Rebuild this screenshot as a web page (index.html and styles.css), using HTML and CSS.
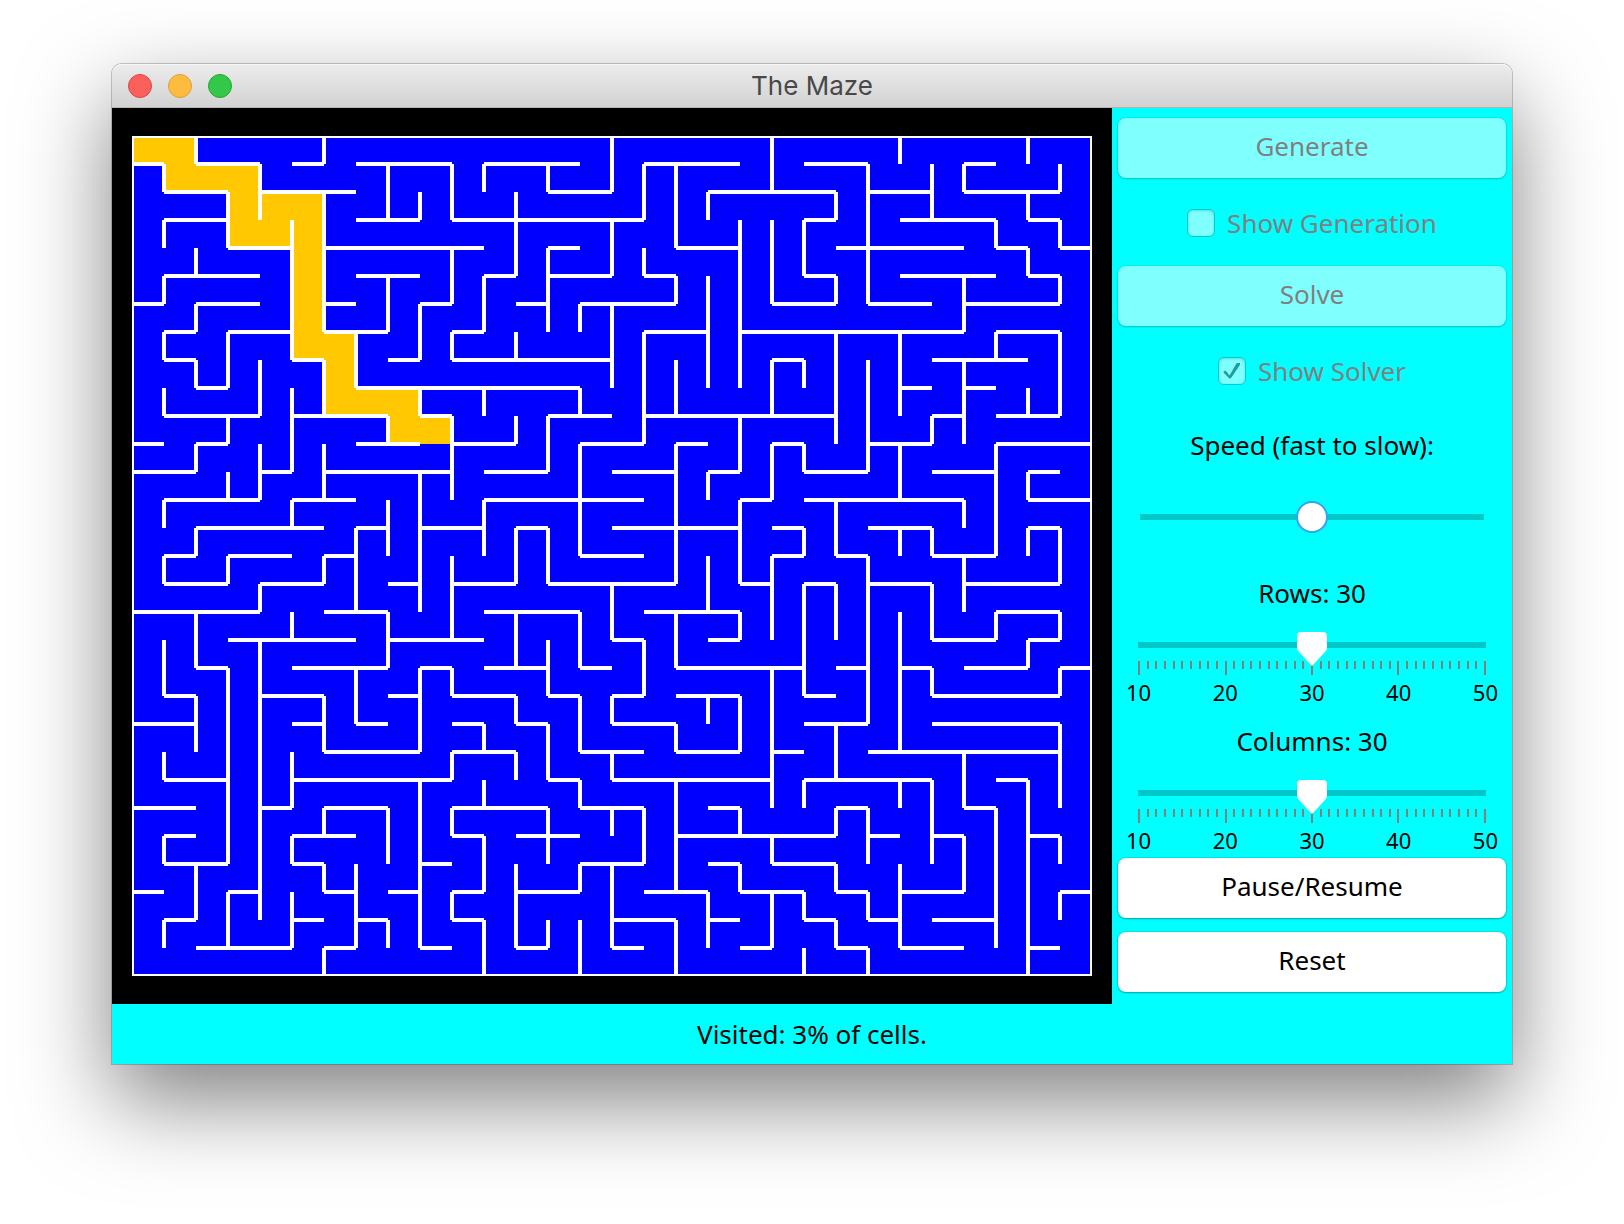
FILE: index.html
```html
<!DOCTYPE html>
<html lang="en">
<head>
<meta charset="utf-8">
<title>The Maze</title>
<link rel="stylesheet" href="styles.css">
</head>
<body>
<main class="window">
  <header class="titlebar">
    <div class="lights">
      <button class="light light-close" type="button" aria-label="Close"></button>
      <button class="light light-minimize" type="button" aria-label="Minimize"></button>
      <button class="light light-zoom" type="button" aria-label="Zoom"></button>
    </div>
    <h1 class="title">The Maze</h1>
  </header>

  <div class="content">
    <div class="board">
      <!-- One unit per cell: 30 columns by 30 rows -->
      <svg class="maze" viewBox="0 0 30 30" preserveAspectRatio="none" role="img" aria-label="Maze with the solver's path">
        <path class="trail" d="M0 0H2V1H4V2H6V7H7V9H9V10H10V11H8V10H6V8H5V4H3V2H1V1H0Z"/>
        <path class="walls" d="
          M0 1H1M2 1H4M5 1H6M7 1H10M11 1H14M16 1H19M21 1H23M26 1H27
          M1 2H3M4 2H7M13 2H15M18 2H22M23 2H25M26 2H29
          M1 3H3M7 3H9M10 3H16M21 3H22M24 3H27M28 3H29
          M3 4H5M6 4H11M13 4H14M17 4H19M22 4H26M27 4H28M29 4H30
          M1 5H4M7 5H9M11 5H12M13 5H15M16 5H17M21 5H22M24 5H27M28 5H29
          M0 6H1M2 6H4M6 6H7M9 6H10M12 6H13M14 6H17M20 6H22M23 6H25M26 6H29
          M1 7H2M3 7H5M6 7H8M10 7H11M16 7H18M19 7H26M27 7H29
          M1 8H2M5 8H6M8 8H9M10 8H15M20 8H21M25 8H28
          M2 9H3M7 9H14M24 9H25M26 9H27
          M1 10H4M5 10H8M9 10H10M13 10H15M16 10H22M25 10H26M27 10H29
          M0 11H1M2 11H3M7 11H9M10 11H12M14 11H16M17 11H18M20 11H21M23 11H25M27 11H30
          M0 12H2M4 12H5M6 12H10M11 12H13M15 12H17M18 12H19M21 12H23M25 12H27M28 12H29
          M1 13H4M5 13H7M11 13H16M19 13H20M21 13H26M28 13H30
          M2 14H6M7 14H8M9 14H11M12 14H13M15 14H19M20 14H21M23 14H25M28 14H29
          M1 15H2M3 15H5M6 15H7M14 15H16M20 15H21M22 15H23M25 15H27
          M1 16H3M4 16H6M8 16H9M10 16H12M13 16H17M19 16H20M21 16H22M23 16H25M26 16H29
          M0 17H4M6 17H8M11 17H14M16 17H19M27 17H29
          M3 18H7M8 18H11M15 18H16M18 18H19M25 18H27M28 18H29
          M2 19H3M5 19H8M9 19H10M11 19H13M14 19H15M17 19H21M22 19H23M24 19H25M26 19H28M29 19H30
          M1 20H2M4 20H6M8 20H9M10 20H12M13 20H14M15 20H16M17 20H19M21 20H22M25 20H29
          M0 21H2M5 21H6M7 21H8M10 21H11M12 21H13M15 21H17M21 21H23M25 21H29
          M6 22H9M10 22H12M14 22H16M17 22H19M20 22H21M23 22H29
          M1 23H3M5 23H10M13 23H14M15 23H20M21 23H25M27 23H28
          M0 24H2M4 24H5M6 24H8M10 24H13M14 24H16M18 24H19M22 24H23M26 24H27
          M1 25H2M5 25H7M10 25H11M12 25H14M17 25H22M23 25H24M25 25H26M28 25H29
          M1 26H3M5 26H6M9 26H10M14 26H16M18 26H19M20 26H22
          M0 27H1M3 27H4M6 27H7M8 27H9M10 27H11M12 27H14M16 27H18M19 27H21M22 27H23M24 27H26M29 27H30
          M1 28H2M5 28H6M7 28H8M10 28H11M15 28H17M18 28H19M21 28H22M23 28H24M25 28H27
          M2 29H5M6 29H7M9 29H10M12 29H13M15 29H16M19 29H20M22 29H23M24 29H26M28 29H29"/>
        <path class="walls" d="
          M1 1V2M1 3V4M1 5V6M1 7V8M1 9V10M1 13V14M1 15V16M1 18V20M1 22V23M1 25V26M1 28V29
          M2 0V1M2 4V5M2 6V7M2 8V9M2 11V12M2 14V15M2 17V19M2 20V22M2 26V28
          M3 2V4M3 7V9M3 10V11M3 12V13M3 15V16M3 19V26M3 27V29
          M4 1V3M4 8V10M4 11V13M4 16V17M4 18V28
          M5 3V8M5 9V12M5 13V14M5 17V18M5 22V24M5 25V26M5 27V29
          M6 0V1M6 2V7M6 8V10M6 11V13M6 15V16M6 20V22M6 24V25M6 26V27M6 29V30
          M7 7V9M7 14V17M7 19V21M7 26V29
          M8 1V3M8 5V7M8 10V11M8 13V15M8 17V19M8 24V26M8 28V29
          M9 2V3M9 6V8M9 9V10M9 12V17M9 19V22M9 23V29
          M10 1V3M10 4V6M10 7V8M10 10V13M10 15V18M10 19V20M10 22V23M10 24V25M10 27V28
          M11 1V2M11 5V7M11 9V10M11 13V15M11 21V22M11 23V24M11 25V27M11 28V30
          M12 2V5M12 7V8M12 10V11M12 14V16M12 17V19M12 20V21M12 22V23M12 26V29
          M13 1V2M13 4V7M13 10V12M13 14V16M13 18V20M13 21V23M13 24V26M13 28V29
          M14 6V7M14 9V10M14 11V15M14 17V19M14 20V22M14 23V24M14 26V27M14 28V30
          M15 0V2M15 3V5M15 6V9M15 16V18M15 20V21M15 22V23M15 24V25M15 26V29
          M16 1V3M16 4V5M16 7V11M16 18V20M16 24V26
          M17 1V4M17 5V6M17 8V10M17 11V16M17 17V19M17 21V22M17 23V27M17 28V30
          M18 2V3M18 5V9M18 12V13M18 15V17M18 20V21M18 27V29
          M19 3V9M19 10V12M19 13V16M19 17V18M19 20V22M19 24V25M19 26V27
          M20 0V2M20 3V6M20 8V10M20 11V13M20 15V18M20 19V24M20 25V26M20 27V29
          M21 3V5M21 8V9M21 11V12M21 14V15M21 16V20M21 23V24M21 27V28M21 29V30
          M22 2V3M22 5V6M22 7V11M22 13V15M22 16V18M22 21V23M22 24V25M22 26V27M22 28V29
          M23 1V6M23 8V12M23 15V21M23 24V26M23 27V28M23 29V30
          M24 0V1M24 7V10M24 11V13M24 14V15M24 17V22M24 23V24M24 26V29
          M25 1V3M25 10V11M25 14V15M25 16V18M25 19V20M25 23V26
          M26 1V2M26 5V7M26 8V11M26 13V14M26 15V17M26 22V24M26 25V27
          M27 3V4M27 7V8M27 11V15M27 17V18M27 24V29
          M28 0V1M28 2V3M28 4V5M28 9V10M28 12V13M28 14V15M28 18V19M28 23V30
          M29 1V2M29 3V4M29 5V6M29 7V10M29 14V16M29 17V18M29 19V20M29 21V24M29 25V26M29 27V28"/>
        <rect class="walls" width="30" height="30"/>
      </svg>
    </div>

    <form class="controls">
      <button class="push" type="button" disabled>Generate</button>
      <label class="check check-off"><input class="box" type="checkbox" disabled><span>Show Generation</span></label>
      <button class="push" type="button" disabled>Solve</button>
      <label class="check check-off"><input class="box" type="checkbox" checked disabled><span>Show Solver</span></label>

      <label class="caption" for="speed">Speed (fast to slow):</label>
      <div class="speed"><input class="range range-round" id="speed" type="range" min="0" max="100" value="50"></div>

      <label class="caption" for="rows">Rows: 30</label>
      <div class="scale">
        <input class="range range-pointer" id="rows" type="range" min="10" max="50" value="30">
        <svg class="ticks" viewBox="0 0 40 14" preserveAspectRatio="none" aria-hidden="true">
          <path d="M0 0V14M1 0V8M2 0V8M3 0V8M4 0V8M5 0V8M6 0V8M7 0V8M8 0V8M9 0V8M10 0V14M11 0V8M12 0V8M13 0V8M14 0V8M15 0V8M16 0V8M17 0V8M18 0V8M19 0V8M20 0V14M21 0V8M22 0V8M23 0V8M24 0V8M25 0V8M26 0V8M27 0V8M28 0V8M29 0V8M30 0V14M31 0V8M32 0V8M33 0V8M34 0V8M35 0V8M36 0V8M37 0V8M38 0V8M39 0V8M40 0V14"/>
        </svg>
        <div class="numbers"><span>10</span><span>20</span><span>30</span><span>40</span><span>50</span></div>
      </div>

      <label class="caption" for="columns">Columns: 30</label>
      <div class="scale">
        <input class="range range-pointer" id="columns" type="range" min="10" max="50" value="30">
        <svg class="ticks" viewBox="0 0 40 14" preserveAspectRatio="none" aria-hidden="true">
          <path d="M0 0V14M1 0V8M2 0V8M3 0V8M4 0V8M5 0V8M6 0V8M7 0V8M8 0V8M9 0V8M10 0V14M11 0V8M12 0V8M13 0V8M14 0V8M15 0V8M16 0V8M17 0V8M18 0V8M19 0V8M20 0V14M21 0V8M22 0V8M23 0V8M24 0V8M25 0V8M26 0V8M27 0V8M28 0V8M29 0V8M30 0V14M31 0V8M32 0V8M33 0V8M34 0V8M35 0V8M36 0V8M37 0V8M38 0V8M39 0V8M40 0V14"/>
        </svg>
        <div class="numbers"><span>10</span><span>20</span><span>30</span><span>40</span><span>50</span></div>
      </div>

      <button class="push" type="button">Pause/Resume</button>
      <button class="push" type="reset">Reset</button>
    </form>
  </div>

  <footer class="status">Visited: 3% of cells.</footer>
</main>
</body>
</html>
```
FILE: styles.css
```css
* {
  box-sizing: border-box;
}

body {
  margin: 0;
  padding: 64px 112px 160px;
  background: #fff;
  color: #000;
  font: 26px/32px "Noto Sans", "Open Sans", sans-serif;
}

.window {
  border-radius: 10px 10px 0 0;
  box-shadow: 0 0 0 1px rgba(0, 0, 0, .2), 0 36px 90px rgba(0, 0, 0, .5);
}

.titlebar {
  display: grid;
  grid-template-columns: 1fr auto 1fr;
  align-items: center;
  height: 44px;
  padding: 0 16px;
  border-bottom: 1px solid #b4b4b4;
  border-radius: 10px 10px 0 0;
  background: linear-gradient(#ececec, #d2d2d2);
  box-shadow: inset 0 1px #f6f6f6;
}

.lights {
  display: flex;
  gap: 16px;
}

.light {
  width: 24px;
  height: 24px;
  padding: 0;
  border: 1px solid;
  border-radius: 50%;
}

.light-close {
  border-color: #e0443e;
  background: #fc605c;
}

.light-minimize {
  border-color: #dea032;
  background: #fdbc40;
}

.light-zoom {
  border-color: #24a732;
  background: #34c84a;
}

.title {
  margin: 0;
  color: #484848;
  font: 400 26px/32px Inter, Roboto, sans-serif;
}

.content {
  display: grid;
  grid-template-columns: 5fr 2fr;
}

.board {
  padding: 28px 20px;
  background: #000;
}

.maze {
  display: block;
  width: 100%;
  aspect-ratio: 8 / 7;
  background: #00f;
  shape-rendering: crispEdges;
}

.trail {
  fill: #ffc800;
}

.walls {
  fill: none;
  stroke: #fff;
  stroke-width: 4px;
  vector-effect: non-scaling-stroke;
}

.controls {
  display: grid;
  grid-template-columns: 100%;
  grid-auto-rows: 1fr;
  padding: 4px 0;
  background: #0ff;
}

.push {
  margin: 6px 6px 8px;
  padding: 0 0 4px;
  border: 0;
  border-radius: 8px;
  background: #fff;
  box-shadow: 0 0 1px 1px rgba(0, 80, 80, .15), 0 1px 2px rgba(0, 80, 80, .4);
  color: #000;
  font: inherit;
}

.push:disabled {
  background: #80ffff;
  box-shadow: 0 0 1px 1px rgba(0, 80, 80, .1), 0 1px 2px rgba(0, 80, 80, .25);
  color: #808080;
}

.check {
  display: flex;
  align-items: center;
  justify-content: center;
  gap: 12px;
}

.check-off {
  color: #808080;
}

.box {
  appearance: none;
  display: grid;
  place-items: center;
  width: 28px;
  height: 28px;
  margin: 0;
  border: 1px solid #00cccc;
  border-radius: 6px;
  background: #80ffff;
  box-shadow: inset 0 1px 3px rgba(0, 120, 120, .25);
}

.box:checked::after {
  content: "";
  width: 17px;
  height: 17px;
  background: #1f9c9c;
  clip-path: path("M0 10Q1 7 3 9L6 13L13 1Q15 -1 17 1L16 3L8 15Q6 17 5 15Z");
}

.caption {
  align-self: center;
  text-align: center;
}

.speed {
  display: flex;
  align-items: center;
  padding: 0 28px 4px;
}

.range {
  appearance: none;
  display: block;
  width: 100%;
  margin: 0;
  background: none;
}

.range::-webkit-slider-thumb {
  appearance: none;
  background: #fff;
}

.range-round {
  height: 32px;
}

.range-round::-webkit-slider-runnable-track {
  height: 32px;
  background: linear-gradient(#00c8c8, #00c8c8) 0 13px / 100% 6px no-repeat;
}

.range-round::-webkit-slider-thumb {
  width: 32px;
  height: 32px;
  border: 2px solid #2fa4f0;
  border-radius: 50%;
}

.scale {
  display: grid;
  grid-template-columns: 100%;
  align-content: start;
  padding: 2px 26px 0;
}

.range-pointer {
  position: relative;
  z-index: 1;
  height: 34px;
}

.range-pointer::-webkit-slider-runnable-track {
  height: 34px;
  background: linear-gradient(#00c8c8, #00c8c8) 0 10px / 100% 6px no-repeat;
}

.range-pointer::-webkit-slider-thumb {
  width: 30px;
  height: 34px;
  clip-path: path("M4 0H26Q30 0 30 4V16Q30 18 28 20L15 34L2 20Q0 18 0 16V4Q0 0 4 0Z");
}

.ticks {
  display: block;
  justify-self: center;
  width: calc(100% - 2px);
  height: 14px;
  margin-top: -5px;
  overflow: visible;
  shape-rendering: crispEdges;
}

.ticks path {
  fill: none;
  stroke: #808080;
  stroke-width: 2px;
  vector-effect: non-scaling-stroke;
}

.numbers {
  display: flex;
  justify-content: space-between;
  margin: 6px -12px 0;
  font-size: 22px;
  line-height: 22px;
}

.status {
  padding: 14px 0;
  background: #0ff;
  text-align: center;
}
```
